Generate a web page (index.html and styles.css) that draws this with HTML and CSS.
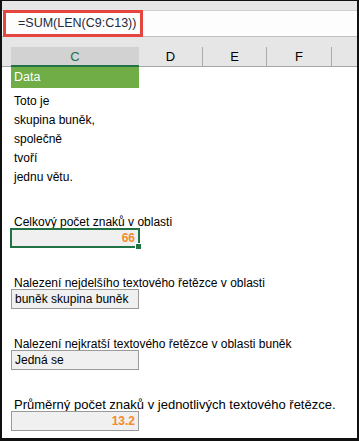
FILE: index.html
```html
<!DOCTYPE html>
<html lang="cs">
<head>
    <meta charset="UTF-8">
    <meta name="viewport" content="width=device-width, initial-scale=1.0">
    <title>Funkce LEN</title>
    <link rel="stylesheet" href="styles.css">
</head>
<body>
    <div class="frame">
        <!-- Řádek vzorců -->
        <div class="toolbar">
            <div class="formula-bar">
                <div class="formula">=SUM(LEN(C9:C13))</div>
            </div>
        </div>

        <!-- Záhlaví sloupců -->
        <div class="col-headers">
            <div class="corner"></div>
            <div class="col-head selected">C</div>
            <div class="col-head">D</div>
            <div class="col-head">E</div>
            <div class="col-head">F</div>
            <div class="col-rest"></div>
        </div>

        <div class="sheet">
            <div class="cell-head">Data</div>
            <div class="rows">
                <div class="row">Toto je</div>
                <div class="row">skupina buněk,</div>
                <div class="row">společně</div>
                <div class="row">tvoří</div>
                <div class="row">jednu větu.</div>
            </div>

            <div class="block">
                <div class="label">Celkový počet znaků v oblasti</div>
                <div class="box active num">66<span class="handle"></span></div>
            </div>

            <div class="block">
                <div class="label">Nalezení nejdelšího textového řetězce v oblasti</div>
                <div class="box">buněk skupina buněk</div>
            </div>

            <div class="block">
                <div class="label">Nalezení nejkratší textového řetězce v oblasti buněk</div>
                <div class="box">Jedná se</div>
            </div>

            <div class="block">
                <div class="label big">Průměrný počet znaků v jednotlivých textového řetězce.</div>
                <div class="box num">13.2</div>
            </div>
        </div>
    </div>
</body>
</html>
```

FILE: styles.css
```css
body {
    margin: 0;
    font-family: "Liberation Sans", Arial, sans-serif;
    font-size: 12px;
    color: #000;
}
.frame {
    width: 359px;
    height: 441px;
    box-sizing: border-box;
    border-top: 1px solid #111;
    border-left: 2px solid #111;
    border-right: 2px solid #111;
    border-bottom: 3px solid #111;
    background: #fff;
    overflow: hidden;
}
.toolbar {
    background: #e6e6e6;
    padding-top: 9px;
}
.formula-bar {
    height: 25px;
    background: #fdfdfd;
    border-top: 1px solid #cfcfcf;
    border-bottom: 1px solid #c2c2c2;
}
.formula {
    width: 140px;
    height: 27px;
    margin: -1px 0 0 1px;
    box-sizing: border-box;
    border: 3px solid #e5453f;
    padding-left: 12px;
    font-size: 12.5px;
    line-height: 21px;
    color: #1f2a3a;
}
.col-headers {
    display: grid;
    grid-template-columns: 9px 128px 64px 64px 65px 1fr;
    align-items: end;
    height: 29px;
    background: #e6e6e6;
    border-bottom: 1px solid #a6a6a6;
}
.col-head {
    height: 19px;
    line-height: 19px;
    text-align: center;
    font-size: 13px;
    border-right: 1px solid #ababab;
    box-sizing: border-box;
}
.col-head.selected {
    background: #d2d2d2;
    color: #217346;
    border-right: none;
    border-bottom: 2px solid #217346;
    margin-bottom: -1px;
    height: 20px;
}
.sheet {
    padding-left: 9px;
}
.cell-head {
    width: 128px;
    height: 21px;
    line-height: 21px;
    background: #70ad47;
    color: #fff;
    font-size: 12.5px;
    padding-left: 3px;
    box-sizing: border-box;
}
.rows {
    padding-top: 4px;
}
.row {
    height: 19px;
    line-height: 19px;
    padding-left: 3px;
}
.block {
    margin-top: 29px;
}
.block:first-of-type {
    margin-top: 31px;
}
.label {
    line-height: 12px;
    padding-left: 3px;
    white-space: nowrap;
}
.label.big {
    font-size: 13px;
}
.box {
    position: relative;
    width: 128px;
    height: 20px;
    box-sizing: border-box;
    border: 1px solid #9a9a9a;
    background: #f0f0f0;
    line-height: 18px;
    padding: 0 3px;
}
.box.num {
    text-align: right;
    font-weight: bold;
    color: #f58a2b;
}
.box.active {
    width: 130px;
    margin-left: -1px;
    border: 2px solid #217346;
    line-height: 16px;
}
.handle {
    position: absolute;
    right: -4px;
    bottom: -4px;
    width: 5px;
    height: 5px;
    background: #217346;
    border: 1px solid #fff;
}
```
